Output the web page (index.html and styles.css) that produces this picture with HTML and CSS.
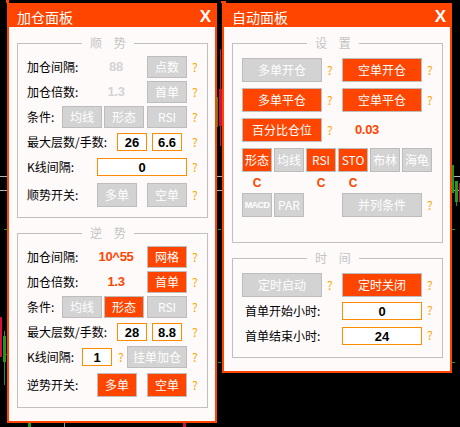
FILE: index.html
```html
<!DOCTYPE html>
<html lang="zh-CN">
<head>
<meta charset="utf-8">
<title>面板</title>
<link rel="stylesheet" href="styles.css">
</head>
<body>
<div class="chart" aria-hidden="true">
  <span class="pl pl-a"></span>
  <span class="pl pl-b"></span>
  <span class="tick t1"></span>
  <span class="tick t2"></span>
  <span class="tick t3"></span>
  <span class="tick t4"></span>
  <span class="tick t5"></span>
  <span class="tick t6"></span>
  <span class="cd red c1"></span>
  <span class="cd green c2w"></span>
  <span class="cd green c2"></span>
  <span class="cd red c3w"></span>
  <span class="cd red c3"></span>
  <span class="cd green c4"></span>
  <span class="cd green c5"></span>
  <span class="cd green c6w"></span>
  <span class="cd green c6"></span>
  <span class="cd red c7"></span>
  <span class="cd green c8"></span>
  <span class="cd gray c9"></span>
  <span class="cd red c10"></span>
  <span class="mk mk1"></span>
  <span class="mk mk2"></span>
</div>

<div class="desk">
  <section class="panel panel-left">
    <header class="panel-head"><span class="panel-title">加仓面板</span><span class="panel-close">X</span></header>
    <div class="panel-body">
      <fieldset class="group group-l">
        <legend>顺 势</legend>
        <div class="row">
          <span class="lbl w69">加仓间隔:</span><span class="val off">88</span>
          <button class="btn off w40 ml11">点数</button><span class="q">?</span>
        </div>
        <div class="row">
          <span class="lbl w69">加仓倍数:</span><span class="val off">1.3</span>
          <button class="btn off w40 ml11">首单</button><span class="q">?</span>
        </div>
        <div class="row">
          <span class="lbl w35">条件:</span>
          <button class="btn off w40">均线</button>
          <button class="btn off w40 ml2">形态</button>
          <button class="btn off w40 ml3">RSI</button><span class="q">?</span>
        </div>
        <div class="row">
          <span class="lbl w90">最大层数/手数:</span>
          <span class="field w30">26</span>
          <span class="field w30 ml5">6.6</span><span class="q ml10">?</span>
        </div>
        <div class="row">
          <span class="lbl w70">K线间隔:</span>
          <span class="field w90">0</span><span class="q">?</span>
        </div>
        <div class="row row-tall">
          <span class="lbl w70">顺势开关:</span>
          <button class="btn off w40 tall">多单</button>
          <button class="btn off w40 tall ml10">空单</button><span class="q">?</span>
        </div>
      </fieldset>

      <fieldset class="group group-l group-next">
        <legend>逆 势</legend>
        <div class="row">
          <span class="lbl w69">加仓间隔:</span><span class="val on">10^55</span>
          <button class="btn on w40 ml11">网格</button><span class="q">?</span>
        </div>
        <div class="row">
          <span class="lbl w69">加仓倍数:</span><span class="val on">1.3</span>
          <button class="btn on w40 ml11">首单</button><span class="q">?</span>
        </div>
        <div class="row">
          <span class="lbl w35">条件:</span>
          <button class="btn off w40">均线</button>
          <button class="btn on w40 ml2">形态</button>
          <button class="btn off w40 ml3">RSI</button><span class="q">?</span>
        </div>
        <div class="row">
          <span class="lbl w90">最大层数/手数:</span>
          <span class="field w30">28</span>
          <span class="field w30 ml5">8.8</span><span class="q ml10">?</span>
        </div>
        <div class="row">
          <span class="lbl w55">K线间隔:</span>
          <span class="field w30">1</span><span class="q ml6">?</span>
          <button class="btn off w60 ml2">挂单加仓</button><span class="q">?</span>
        </div>
        <div class="row row-tall">
          <span class="lbl w70">逆势开关:</span>
          <button class="btn on w40 tall">多单</button>
          <button class="btn on w40 tall ml10">空单</button><span class="q">?</span>
        </div>
      </fieldset>
    </div>
  </section>

  <section class="panel panel-right">
    <header class="panel-head"><span class="panel-title">自动面板</span><span class="panel-close">X</span></header>
    <div class="panel-body">
      <fieldset class="group group-r group-set">
        <legend>设 置</legend>
        <div class="row row-b">
          <button class="btn off w80 tall">多单开仓</button><span class="q">?</span>
          <button class="btn on w80 tall ml8">空单开仓</button><span class="q">?</span>
        </div>
        <div class="row row-b gap6">
          <button class="btn on w80 tall">多单平仓</button><span class="q">?</span>
          <button class="btn on w80 tall ml8">空单平仓</button><span class="q">?</span>
        </div>
        <div class="row row-b gap6">
          <button class="btn on w80 tall">百分比仓位</button><span class="q">?</span>
          <span class="val on pct">0.03</span>
        </div>
        <div class="row row-b gap6 ind">
          <button class="btn on w30 tall">形态</button>
          <button class="btn off w30 tall">均线</button>
          <button class="btn on w30 tall">RSI</button>
          <button class="btn on w30 tall">STO</button>
          <button class="btn off w30 tall">布林</button>
          <button class="btn off w30 tall">海龟</button>
        </div>
        <div class="row row-c ind">
          <span class="cmark">C</span><span></span><span class="cmark">C</span><span class="cmark">C</span><span></span><span></span>
        </div>
        <div class="row row-b gap3">
          <button class="btn off w30 tall macd">MACD</button>
          <button class="btn off w30 tall ml2">PAR</button>
          <button class="btn off w80 tall ml38">并列条件</button><span class="q">?</span>
        </div>
      </fieldset>

      <fieldset class="group group-r group-next group-time">
        <legend>时 间</legend>
        <div class="row row-b">
          <button class="btn off w80 tall">定时启动</button><span class="q">?</span>
          <button class="btn on w80 tall ml8">定时关闭</button><span class="q">?</span>
        </div>
        <div class="row">
          <span class="lbl w100 pad3">首单开始小时:</span>
          <span class="field w80">0</span><span class="q q-up">?</span>
        </div>
        <div class="row">
          <span class="lbl w100 pad3">首单结束小时:</span>
          <span class="field w80">24</span><span class="q q-up">?</span>
        </div>
      </fieldset>
    </div>
  </section>
</div>
</body>
</html>
```

FILE: styles.css
```css
* { box-sizing: border-box; }

html, body {
  margin: 0;
  padding: 0;
}

body {
  width: 460px;
  height: 427px;
  overflow: hidden;
  background: #000;
  position: relative;
  font-family: "Noto Sans CJK SC", "Noto Sans", sans-serif;
  font-size: 12px;
}

/* ---------- chart behind the panels ---------- */
.chart {
  position: absolute;
  inset: 0;
  z-index: 0;
}
.chart span { position: absolute; display: block; }
.pl { left: 0; width: 460px; height: 1px; background: #b4b4b4; }
.pl-a { top: 176px; }
.pl-b { top: 190px; }
.tick { height: 1px; width: 3px; background: #1f9a1f; }
.t1 { left: 4px; top: 229px; }
.t2 { left: 218px; top: 229px; }
.t3 { left: 452px; top: 229px; }
.t4 { left: 218px; top: 362px; }
.t5 { left: 452px; top: 362px; }
.t6 { left: 5px; top: 354px; }
.green { background: #1f9a1f; }
.red { background: #d0103a; }
.gray { background: #9a9a9a; }
.c1 { left: 0; top: 317px; width: 2px; height: 40px; }
.c2w { left: 4px; top: 331px; width: 1px; height: 54px; }
.c2 { left: 3px; top: 336px; width: 3px; height: 26px; }
.c3w { left: 220px; top: 49px; width: 1px; height: 97px; }
.c3 { left: 219px; top: 89px; width: 3px; height: 37px; }
.c4 { left: 217px; top: 97px; width: 1px; height: 30px; }
.c5 { left: 452px; top: 165px; width: 2px; height: 28px; }
.c6w { left: 456px; top: 181px; width: 1px; height: 25px; }
.c6 { left: 455px; top: 181px; width: 3px; height: 21px; }
.c7 { left: 459px; top: 183px; width: 1px; height: 19px; }
.c8 { left: 28px; top: 423px; width: 3px; height: 4px; }
.c9 { left: 64px; top: 423px; width: 1px; height: 4px; }
.c10 { left: 183px; top: 423px; width: 3px; height: 4px; }
.mk { background: #ff4500; }
.mk1 { left: 6px; top: 0; width: 3px; height: 3px; }
.mk2 { left: 221px; top: 1px; width: 5px; height: 2px; }

/* ---------- panels ---------- */
.desk {
  position: relative;
  z-index: 1;
  display: flex;
  align-items: flex-start;
  gap: 5px;
  padding: 3px 0 0 7px;
}

.panel {
  border: 2px solid #ff4500;
  background: #fffafa;
  display: flex;
  flex-direction: column;
}
.panel-left { width: 210px; height: 420px; }
.panel-right { width: 230px; height: 370px; }

.panel-head {
  height: 22px;
  background: #ff4500;
  color: #fff;
  display: flex;
  justify-content: space-between;
  align-items: center;
  padding: 2px 4px 0 8px;
}
.panel-title {
  font-size: 14px;
  line-height: 20px;
}
.panel-close {
  font-family: "Liberation Sans", Arial, sans-serif;
  font-weight: bold;
  font-size: 17px;
  line-height: 20px;
}

.panel-body {
  padding: 9px 7px 0 8px;
}

.group {
  margin: 0;
  min-width: 0;
  border: 1px solid #c0c0c0;
  padding: 6px 0 10px 9px;
}
.group legend {
  padding: 0 8px;
  font-size: 12px;
  line-height: 14px;
  color: #c3c3c3;
  word-spacing: 9px;
}
.group-l legend { margin-left: 55px; }
.group-r legend { margin-left: 65px; }
.group-next { margin-top: 8px; }
.group-set { padding: 8px 0 25px 9px; }
.group-time { padding: 8px 0 10px 9px; }

.row {
  display: flex;
  align-items: center;
  height: 22px;
  margin-top: 3px;
}
.group legend + .row { margin-top: 0; }
.row-tall { height: 24px; margin-top: 5px; }
.row-b { height: 24px; }
.row-b.gap6 { margin-top: 6px; }
.row-b.gap3 { margin-top: 3px; }
.row-c { height: 14px; margin-top: 4px; }
.ind { display: grid; grid-template-columns: repeat(6, 30px); column-gap: 2px; }

.lbl {
  color: #000;
  line-height: 16px;
  white-space: nowrap;
}
.pad3 { padding-left: 3px; }

.w30 { width: 30px; }
.w35 { width: 35px; }
.w40 { width: 40px; }
.w55 { width: 55px; }
.w60 { width: 60px; }
.w69 { width: 69px; }
.w70 { width: 70px; }
.w80 { width: 80px; }
.w90 { width: 90px; }
.w100 { width: 100px; }
.ml2 { margin-left: 2px; }
.ml3 { margin-left: 3px; }
.ml5 { margin-left: 5px; }
.ml6 { margin-left: 6px; }
.ml8 { margin-left: 8px; }
.ml10 { margin-left: 10px; }
.ml11 { margin-left: 11px; }
.ml38 { margin-left: 38px; }

.val {
  width: 40px;
  text-align: center;
  font-family: "Liberation Sans", Arial, sans-serif;
  font-weight: bold;
  font-size: 13px;
  letter-spacing: -0.3px;
  line-height: 16px;
}
.val.off { color: #d3d3d3; }
.val.on { color: #ff4500; }
.pct { margin-left: 13px; }

.btn {
  height: 22px;
  margin-top: 0;
  margin-bottom: 0;
  margin-right: 0;
  padding: 0;
  border: 1px solid #bdbdbd;
  color: #fff;
  font-family: "Noto Sans CJK SC", "Noto Sans", sans-serif;
  font-size: 12px;
  line-height: 18px;
  white-space: nowrap;
  overflow: hidden;
}
.btn.tall { height: 24px; }
.btn.off { background: #d3d3d3; }
.btn.on { background: #ff4500; }
.btn.macd {
  font-family: "Liberation Sans", Arial, sans-serif;
  font-weight: bold;
  font-size: 9px;
  letter-spacing: -0.6px;
}

.field {
  height: 18px;
  display: flex;
  align-items: center;
  justify-content: center;
  border: 1px solid #ff8c00;
  background: #fff;
  color: #000;
  font-family: "Liberation Sans", Arial, sans-serif;
  font-weight: bold;
  font-size: 13px;
}

.q {
  width: 7px;
  margin-left: 5px;
  color: #ffa500;
  font-size: 12px;
  line-height: 14px;
}
.q.ml6 { margin-left: 6px; }
.q.ml10 { margin-left: 10px; }
.q-up { margin-top: -3px; }

.cmark {
  text-align: center;
  color: #ff4500;
  font-family: "Liberation Sans", Arial, sans-serif;
  font-weight: bold;
  font-size: 12px;
  line-height: 14px;
}
```
